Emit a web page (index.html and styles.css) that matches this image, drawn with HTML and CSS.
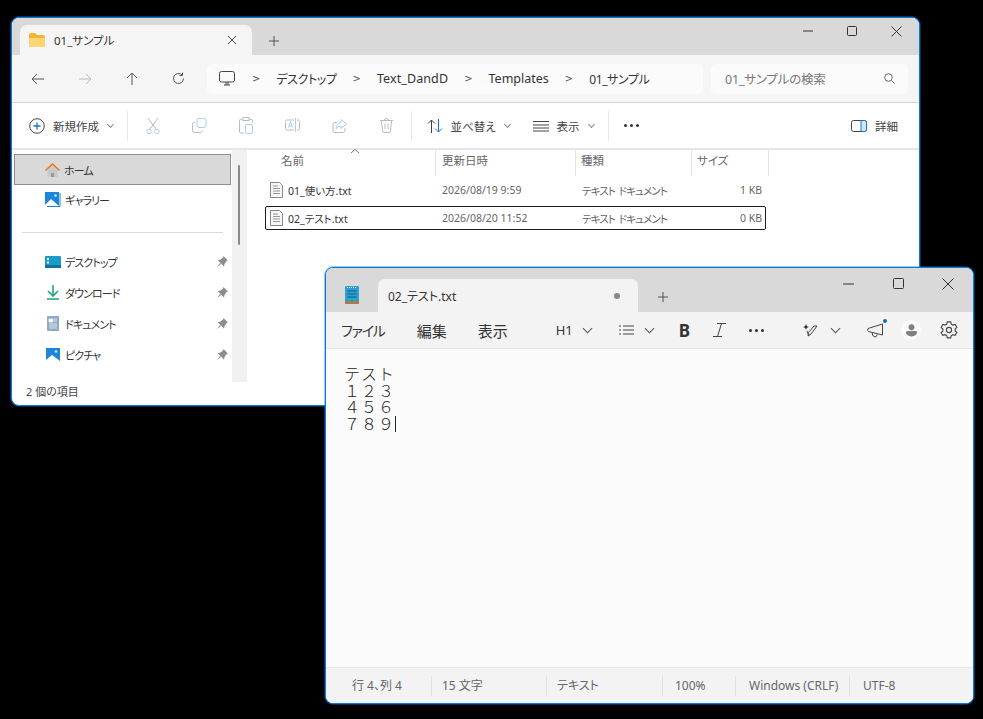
FILE: index.html
```html
<!DOCTYPE html>
<html lang="ja">
    <head>
        <meta charset="utf-8">
        <title>01_サンプル</title>
        <link rel="stylesheet" href="styles.css">
    </head>
    <body>
        <div class="window explorer">
            <div class="titlebar">
                <div class="tab">
                    <svg class="tab-icon" width="16" height="14" viewBox="0 0 16 14"><path d="M0 2q0-2 2-2h4l2 2h6q2 0 2 2v8q0 2-2 2H2q-2 0-2-2z" fill="#f2b632"/><path d="M0 5h16v7q0 2-2 2H2q-2 0-2-2z" fill="#fcd672"/></svg>
                    <span class="tab-name">01_サンプル</span>
                    <svg class="tab-close" width="10" height="10" viewBox="0 0 10 10"><path d="M1 1l8 8M9 1l-8 8" stroke="#444" fill="none"/></svg>
                </div>
                <svg class="tab-add" width="10" height="10" viewBox="0 0 10 10"><path d="M5 0v10M0 5h10" stroke="#555" fill="none"/></svg>
                <div class="controls">
                    <div class="control"><svg width="10" height="10" viewBox="0 0 10 10"><path d="M0 5h10" stroke="#333" stroke-width="1.2"/></svg></div>
                    <div class="control"><svg width="10" height="10" viewBox="0 0 10 10"><rect x=".5" y=".5" width="9" height="9" rx="1" fill="none" stroke="#333"/></svg></div>
                    <div class="control"><svg width="11" height="11" viewBox="0 0 11 11"><path d="M.5.5l10 10M10.5.5l-10 10" stroke="#333" fill="none"/></svg></div>
                </div>
            </div>

            <div class="addressbar">
                <div class="nav"><svg width="14" height="12" viewBox="0 0 14 12"><path d="M13 6H1M6 1L1 6l5 5" stroke="#555" fill="none"/></svg></div>
                <div class="nav"><svg width="14" height="12" viewBox="0 0 14 12"><path d="M1 6h12M8 1l5 5-5 5" stroke="#bbb" fill="none"/></svg></div>
                <div class="nav"><svg width="12" height="14" viewBox="0 0 12 14"><path d="M6 13V1M1 6l5-5 5 5" stroke="#555" fill="none"/></svg></div>
                <div class="nav"><svg width="13" height="13" viewBox="0 0 13 13"><path d="M11.5 6.5a5 5 0 1 1-1.5-3.6M10.5 .5v3h-3" stroke="#555" fill="none"/></svg></div>
                <div class="path">
                    <svg class="path-pc" width="16" height="15" viewBox="0 0 16 15"><rect x=".5" y=".5" width="15" height="10.5" rx="2" fill="none" stroke="#444"/><path d="M5 14h6M7 11v3M9 11v3" stroke="#444" fill="none"/></svg>
                    <span class="crumb-sep">&gt;</span><span class="crumb crumb-ja">デスクトップ</span>
                    <span class="crumb-sep">&gt;</span><span class="crumb crumb-text">Text_DandD</span>
                    <span class="crumb-sep">&gt;</span><span class="crumb">Templates</span>
                    <span class="crumb-sep">&gt;</span><span class="crumb crumb-ja">01_サンプル</span>
                </div>
                <div class="search">
                    <span>01_サンプルの検索</span>
                    <svg width="11" height="11" viewBox="0 0 11 11"><circle cx="4.5" cy="4.5" r="3.8" fill="none" stroke="#666"/><path d="M7.5 7.5l3 3" stroke="#666"/></svg>
                </div>
            </div>

            <div class="toolbar">
                <div class="tool tool-new">
                    <svg width="16" height="16" viewBox="0 0 16 16"><circle cx="8" cy="8" r="7.3" fill="none" stroke="#444"/><path d="M8 4.500v7M4.500 8h7" stroke="#1a73c8" stroke-width="1.3"/></svg>
                    <span>新規作成</span><i class="chev"></i>
                </div>
                <div class="tool-sep"></div>
                <div class="tool-icon"><svg width="14" height="16" viewBox="0 0 14 16"><path d="M2 0l8 11M12 0L4 11" stroke="#bbb" fill="none"/><circle cx="3" cy="13.5" r="2.3" fill="none" stroke="#a9d0f0"/><circle cx="11" cy="13.5" r="2.3" fill="none" stroke="#a9d0f0"/></svg></div>
                <div class="tool-icon"><svg width="15" height="15" viewBox="0 0 15 15"><rect x="5" y=".5" width="9" height="9" rx="2" fill="none" stroke="#a9d0f0"/><path d="M3 4Q.5 4 .5 6.5V12q0 2.500 2.500 2.500h5q2 0 2.500-2" fill="none" stroke="#bbb"/></svg></div>
                <div class="tool-icon"><svg width="14" height="17" viewBox="0 0 14 17"><path d="M3.500 2.500H1.500q-1 0-1 1V15q0 1 1 1H5M10.500 2.500h2q1 0 1 1V6" fill="none" stroke="#bbb"/><rect x="4" y=".5" width="6" height="3" fill="none" stroke="#bbb"/><rect x="6.5" y="7.5" width="7" height="9" rx="1.5" fill="none" stroke="#a9d0f0"/></svg></div>
                <div class="tool-icon"><svg width="16" height="15" viewBox="0 0 16 15"><path d="M9 2H2Q.5 2 .5 3.500v7Q.5 12 2 12h7M12 2h1q1.500 0 1.500 1.500v7Q14.500 12 13 12h-1" fill="none" stroke="#bbb"/><path d="M10.500 0v14M3.500 9.500l2-6 2 6M4.200 8h2.600" fill="none" stroke="#a9d0f0"/></svg></div>
                <div class="tool-icon"><svg width="15" height="14" viewBox="0 0 15 14"><path d="M13 9v2.500Q13 13.500 11 13.500H3Q1 13.500 1 11.500v-6Q1 3.500 3 3.500h2" fill="none" stroke="#bbb"/><path d="M9 .5l5.500 4.500L9 9.500V7Q5.500 7 4 10q.5-6 5-6.500z" fill="none" stroke="#a9d0f0"/></svg></div>
                <div class="tool-icon"><svg width="13" height="15" viewBox="0 0 13 15"><path d="M0 2.500h13M4.500 2.500q0-2 2-2t2 2M1.500 2.500l1 10.500q0 1.500 1.500 1.500h5q1.500 0 1.500-1.500l1-10.500M5 5.500v6M8 5.500v6" fill="none" stroke="#bbb"/></svg></div>
                <div class="tool-sep tool-sep-b"></div>
                <div class="tool tool-sort">
                    <svg width="16" height="14" viewBox="0 0 16 14"><path d="M4.500 14V1M1 4.500L4.500 1 8 4.500" fill="none" stroke="#444"/><path d="M11.500 0v13M8 9.500l3.500 3.500L15 9.500" fill="none" stroke="#1a73c8"/></svg>
                    <span>並べ替え</span><i class="chev"></i>
                </div>
                <div class="tool tool-view">
                    <svg width="16" height="12" viewBox="0 0 16 12"><path d="M0 1.500h16M0 5h16M0 8h16M0 11h16" stroke="#444" fill="none"/></svg>
                    <span>表示</span><i class="chev"></i>
                </div>
                <div class="tool-sep"></div>
                <div class="tool-more"><b></b><b></b><b></b></div>
                <div class="tool tool-detail">
                    <svg width="16" height="12" viewBox="0 0 16 12"><rect x=".5" y=".5" width="15" height="11" rx="2" fill="none" stroke="#444"/><path d="M10 .5h3.500q2 0 2 2v7q0 2-2 2H10z" fill="#cfe6f8" stroke="#1a73c8"/></svg>
                    <span>詳細</span>
                </div>
            </div>

            <div class="main">
                <div class="sidebar">
                    <div class="side-item selected">
                        <svg width="15" height="14" viewBox="0 0 15 14"><path d="M2.500 7v7h10V7L7.500 2.500z" fill="#c9c9c9"/><path d="M6 14v-4h3v4z" fill="#999"/><path d="M.5 7.500l7-6.500 7 6.500" fill="none" stroke="#e8751a" stroke-width="1.5"/></svg>
                        <span>ホーム</span>
                    </div>
                    <div class="side-item">
                        <svg width="16" height="15" viewBox="0 0 16 15"><rect width="14" height="14" fill="#1d86d8"/><circle cx="10.500" cy="3.500" r="1.300" fill="#cfe6f8"/><path d="M0 13l6-6 8 7H0z" fill="#fff"/><path d="M15 1v13.500H2" fill="none" stroke="#1d86d8"/></svg>
                        <span>ギャラリー</span>
                    </div>
                    <div class="side-divider"></div>
                    <div class="side-item">
                        <svg width="16" height="12" viewBox="0 0 16 12"><rect width="16" height="12" rx="1" fill="#1a9bc9"/><rect y="9" width="16" height="3" fill="#116f9c"/><path d="M2 2h2v2H2zM2 5.500h2v2H2z" fill="#fff"/></svg>
                        <span>デスクトップ</span><svg class="pin" width="11" height="11" viewBox="0 0 11 11"><path d="M6.500 0L11 4.500 9.500 5l-2 3-.5 2.500L.8 4.300 3.500 3.500l2.500-2zM3 7l-3 4 4-3z" fill="#8c8c8c"/></svg>
                    </div>
                    <div class="side-item">
                        <svg width="16" height="15" viewBox="0 0 16 15"><path d="M8 0v10M3 6l5 5 5-5" fill="none" stroke="#23a97b" stroke-width="1.6"/><path d="M2 14h12" stroke="#23a97b" stroke-width="1.6"/></svg>
                        <span>ダウンロード</span><svg class="pin" width="11" height="11" viewBox="0 0 11 11"><path d="M6.500 0L11 4.500 9.500 5l-2 3-.5 2.500L.8 4.300 3.500 3.500l2.500-2zM3 7l-3 4 4-3z" fill="#8c8c8c"/></svg>
                    </div>
                    <div class="side-item">
                        <svg width="16" height="15" viewBox="0 0 16 15"><rect x="2" width="12" height="15" rx="1" fill="#8fa9c8"/><path d="M4 3h4v3H4zM9 3h3M9 5h3M4 8h8M4 10h8M4 12h8" fill="#fff" stroke="#eef2f7" stroke-width=".8"/></svg>
                        <span>ドキュメント</span><svg class="pin" width="11" height="11" viewBox="0 0 11 11"><path d="M6.500 0L11 4.500 9.500 5l-2 3-.5 2.500L.8 4.300 3.500 3.500l2.500-2zM3 7l-3 4 4-3z" fill="#8c8c8c"/></svg>
                    </div>
                    <div class="side-item">
                        <svg width="16" height="14" viewBox="0 0 16 14"><rect x="1" width="14" height="13" fill="#1d86d8"/><circle cx="11" cy="3.500" r="1.300" fill="#cfe6f8"/><path d="M1 12l6-5 8 6H1z" fill="#fff"/></svg>
                        <span>ピクチャ</span><svg class="pin" width="11" height="11" viewBox="0 0 11 11"><path d="M6.500 0L11 4.500 9.500 5l-2 3-.5 2.500L.8 4.300 3.500 3.500l2.500-2zM3 7l-3 4 4-3z" fill="#8c8c8c"/></svg>
                    </div>
                </div>
                <div class="side-scroll"><div class="thumb"></div></div>
                <div class="files">
                    <div class="file-head">
                        <div class="col-name">名前</div>
                        <div class="col-date">更新日時</div>
                        <div class="col-type">種類</div>
                        <div class="col-size">サイズ</div>
                    </div>
                    <svg class="sort-caret" width="8" height="4" viewBox="0 0 8 4"><path d="M0 4l4-3.500L8 4" fill="none" stroke="#777"/></svg>
                    <div class="file-row">
                        <svg width="13" height="16" viewBox="0 0 13 16"><path d="M.5.5h9l3 3v12H.5z" fill="#f6f6f6" stroke="#888"/><path d="M3 4h5M3 6.500h7M3 9h7M3 11.500h7" stroke="#999"/></svg>
                        <span class="file-name">01_使い方.txt</span>
                        <span class="file-date">2026/08/19 9:59</span>
                        <span class="file-type">テキスト ドキュメント</span>
                        <span class="file-size">1 KB</span>
                    </div>
                    <div class="file-row focused">
                        <svg width="13" height="16" viewBox="0 0 13 16"><path d="M.5.5h9l3 3v12H.5z" fill="#f6f6f6" stroke="#888"/><path d="M3 4h5M3 6.500h7M3 9h7M3 11.500h7" stroke="#999"/></svg>
                        <span class="file-name">02_テスト.txt</span>
                        <span class="file-date">2026/08/20 11:52</span>
                        <span class="file-type">テキスト ドキュメント</span>
                        <span class="file-size">0 KB</span>
                    </div>
                </div>
            </div>
            <div class="explorer-status">2 個の項目</div>
        </div>

        <div class="window notepad">
            <div class="titlebar">
                <svg class="note-icon" width="14" height="18" viewBox="0 0 14 18"><rect width="14" height="17" rx="1" fill="#2f9fd0"/><rect y="15.5" width="14" height="2.5" fill="#b5763a"/><path d="M2.500 5h9M2.500 8h9M2.500 11h9" stroke="#0d5a85"/><path d="M2 1.500h10" stroke="#d5eef9" stroke-dasharray="1 1"/></svg>
                <div class="tab">
                    <span class="tab-name">02_テスト.txt</span>
                    <i class="tab-dot"></i>
                </div>
                <svg class="tab-add" width="10" height="10" viewBox="0 0 10 10"><path d="M5 0v10M0 5h10" stroke="#555" fill="none"/></svg>
                <div class="controls">
                    <div class="control"><svg width="11" height="10" viewBox="0 0 11 10"><path d="M0 5h11" stroke="#333" stroke-width="1.2"/></svg></div>
                    <div class="control"><svg width="11" height="11" viewBox="0 0 11 11"><rect x=".5" y=".5" width="10" height="10" rx="1" fill="none" stroke="#333"/></svg></div>
                    <div class="control"><svg width="12" height="12" viewBox="0 0 12 12"><path d="M.5.5l11 11M11.500.5l-11 11" stroke="#333" fill="none"/></svg></div>
                </div>
            </div>
            <div class="menubar">
                <span class="menu menu-file">ファイル</span>
                <span class="menu menu-edit">編集</span>
                <span class="menu menu-view">表示</span>
                <span class="fmt-h">H1</span><i class="chev chev-dark chev-h"></i>
                <svg class="fmt-list" width="15" height="10" viewBox="0 0 15 10"><path d="M0 1h2M0 5h2M0 9h2M4 1h11M4 5h11M4 9h11" stroke="#444" fill="none"/></svg><i class="chev chev-dark chev-list"></i>
                <b class="fmt-b">B</b>
                <svg class="fmt-i" width="13" height="14" viewBox="0 0 13 14"><path d="M4 .5h9M0 13.500h9M8.500.5l-4 13" stroke="#444" fill="none"/></svg>
                <div class="tool-more fmt-more"><b></b><b></b><b></b></div>
                <svg class="fmt-ai" width="15" height="15" viewBox="0 0 15 15"><path d="M3 1l.8 2.200L6 4 3.800 4.800 3 7 2.200 4.800 0 4l2.200-.8z" fill="#222"/><path d="M14 3L8 11l-3 2 .5-3.500L11 3zM4 8l2 5" fill="none" stroke="#444"/></svg><i class="chev chev-dark chev-ai"></i>
                <div class="fmt-news">
                    <svg width="18" height="15" viewBox="0 0 18 15"><path d="M15.500 1L1 5.500q-1 2 .5 3L15.500 12zM5 9.500q0 4 3 4.500 2 0 2-2.500" fill="none" stroke="#444"/></svg>
                    <i class="news-dot"></i>
                </div>
                <div class="avatar"><svg width="11" height="13" viewBox="0 0 12 14"><circle cx="6" cy="3.500" r="3.200" fill="#808080"/><path d="M0 9q0-1.500 1.500-1.500h9Q12 7.500 12 9q0 4-6 4.500Q0 13 0 9z" fill="#808080"/></svg></div>
                <svg class="gear" width="18" height="18" viewBox="0 0 16 16"><path d="M6.500.8h3l.5 2 1.500.8 2-.6 1.500 2.600-1.500 1.400v1.800l1.500 1.400-1.500 2.600-2-.6-1.500.8-.5 2h-3l-.5-2-1.500-.8-2 .6L1 10.400l1.500-1.400V7.200L1 5.800l1.500-2.800 2 .6L6 2.800z" fill="none" stroke="#444"/><circle cx="8" cy="8" r="2.300" fill="none" stroke="#444"/></svg>
            </div>
            <div class="editor">
                <div class="editor-line">テスト</div>
                <div class="editor-line">１２３</div>
                <div class="editor-line">４５６</div>
                <div class="editor-line">７８９<i class="caret"></i></div>
            </div>
            <div class="note-status">
                <div class="cell cell-pos">行 4、列 4</div>
                <div class="cell cell-count">15 文字</div>
                <div class="cell cell-kind">テキスト</div>
                <div class="cell cell-zoom">100%</div>
                <div class="cell cell-eol">Windows (CRLF)</div>
                <div class="cell cell-enc">UTF-8</div>
            </div>
        </div>
    </body>
</html>
```

FILE: styles.css
```css
html, body {
    height: 100%;
}

body {
    background: #000;
    color: #333;
    font-family: "Noto Sans", "Noto Sans CJK JP", sans-serif;
    font-feature-settings: "palt";
    margin: 0;
    overflow: hidden;
}

svg {
    display: block;
    flex: none;
}

.window {
    border: 1px solid #0a78d7;
    border-radius: 8px;
    box-shadow: 0 0 0 1px rgba(10, 120, 215, .4);
    box-sizing: border-box;
    display: flex;
    flex-direction: column;
    overflow: hidden;
    position: absolute;
}

.explorer {
    background: #fff;
    height: 389px;
    left: 11px;
    top: 17px;
    width: 909px;
}

.notepad {
    background: #fbfbfb;
    height: 437px;
    left: 325px;
    top: 267px;
    width: 649px;
}

/* title bar, shared */

.titlebar {
    align-items: flex-end;
    background: #d9d9d9;
    display: flex;
    flex: none;
    height: 37px;
}

.tab {
    align-items: center;
    background: #f5f5f5;
    border-radius: 7px 7px 0 0;
    box-sizing: border-box;
    display: flex;
    font-size: 11.5px;
    height: 30px;
    margin-left: 8px;
    padding: 0 15px 0 9px;
    width: 232px;
}

.tab-icon {
    margin-right: 9px;
}

.tab-name {
    flex: 1;
}

.tab-add {
    margin: 0 0 9px 17px;
}

.controls {
    align-self: flex-start;
    display: flex;
    margin-left: auto;
}

.control {
    align-items: center;
    display: flex;
    height: 26px;
    justify-content: center;
    width: 44px;
}

.explorer .controls {
    margin-right: 1px;
}

/* explorer address row */

.addressbar {
    align-items: center;
    background: #f5f5f5;
    border-bottom: 1px solid #d5d5d5;
    display: flex;
    flex: none;
    height: 47px;
    padding-left: 2px;
}

.nav {
    align-items: center;
    display: flex;
    justify-content: center;
    width: 47px;
}

.path {
    align-items: center;
    background: #fbfbfb;
    border-radius: 5px;
    display: flex;
    font-size: 12.5px;
    height: 30px;
    margin-left: 5px;
    padding-left: 12px;
    width: 484px;
}

.path-pc {
    margin-right: 1px;
}

.crumb-ja {
    font-size: 12px;
    letter-spacing: -.4px;
}

.crumb-text {
    letter-spacing: .1px;
}

.crumb-sep {
    color: #555;
    font-family: "DejaVu Sans", sans-serif;
    font-size: 10px;
    margin: 0 16px;
}

.search {
    align-items: center;
    background: #fbfbfb;
    border-radius: 5px;
    box-sizing: border-box;
    color: #777;
    display: flex;
    font-size: 12.5px;
    height: 30px;
    justify-content: space-between;
    letter-spacing: -.2px;
    margin-left: 8px;
    padding: 0 13px 0 14px;
    width: 197px;
}

/* explorer toolbar */

.toolbar {
    align-items: center;
    border-bottom: 2px solid #e6e6e6;
    display: flex;
    flex: none;
    font-size: 11.5px;
    height: 45px;
    padding-left: 17px;
}

.tool {
    align-items: center;
    color: #444;
    display: flex;
    gap: 8px;
}

.tool-new {
    width: 98px;
}

.tool-sep {
    background: #e8e8e8;
    height: 30px;
    margin-right: 2px;
    width: 1px;
}

.tool-icon {
    align-items: center;
    display: flex;
    justify-content: center;
    width: 46.6px;
}

.tool-sep-b {
    margin-left: 1px;
    margin-right: 15px;
}

.tool-sort {
    width: 106px;
}

.tool-view {
    width: 75px;
}

.tool-more {
    display: flex;
    gap: 3px;
    margin-left: 13px;
}

.tool-more b {
    background: #333;
    border-radius: 50%;
    height: 3px;
    width: 3px;
}

.tool-detail {
    margin-left: auto;
    margin-right: 21px;
}

.chev {
    border-bottom: 1px solid #888;
    border-right: 1px solid #888;
    display: block;
    height: 4px;
    margin: -3px 0 0 1px;
    transform: rotate(45deg);
    width: 4px;
}

/* explorer body */

.main {
    display: flex;
    flex: 1;
    min-height: 0;
}

.sidebar {
    box-sizing: border-box;
    flex: none;
    overflow: hidden;
    padding: 4px 1px 0 2px;
    width: 220px;
}

.side-item {
    align-items: center;
    border: 1px solid transparent;
    box-sizing: border-box;
    display: flex;
    font-size: 11px;
    gap: 4px;
    height: 31px;
    letter-spacing: -.9px;
    padding-left: 30px;
}

.side-item .pin {
    margin-left: auto;
    margin-right: 2px;
}

.side-item.selected {
    background: #d9d9d9;
    border-color: #8f8f8f;
    margin-bottom: -1px;
}

.side-divider {
    background: #d9d9d9;
    height: 1px;
    margin: 17px 8px 13px;
}

.side-scroll {
    background: #f1f1f1;
    box-sizing: border-box;
    flex: none;
    padding: 15px 0 0 6px;
    width: 15px;
}

.thumb {
    background: #8a8a8a;
    border-radius: 1px;
    height: 80px;
    width: 2px;
}

.files {
    flex: 1;
    font-size: 10.5px;
    position: relative;
}

.file-head {
    color: #666;
    display: flex;
    font-size: 11.5px;
    height: 26px;
}

.file-head div {
    border-right: 1px solid #e5e5e5;
    box-sizing: border-box;
    line-height: 22px;
}

.col-name {
    padding-left: 34px;
    width: 189px;
}

.col-date {
    padding-left: 6px;
    width: 140px;
}

.col-type {
    padding-left: 5px;
    width: 116px;
}

.col-size {
    padding-left: 5px;
    width: 77px;
}

.sort-caret {
    left: 104px;
    position: absolute;
    top: -1px;
}

.file-row {
    align-items: center;
    border: 1px solid transparent;
    border-radius: 2px;
    box-sizing: border-box;
    display: flex;
    height: 24px;
    margin: 2px 0 0 18px;
    padding-left: 4px;
    width: 501px;
}

.file-row.focused {
    border-color: #1c1c1c;
    margin-top: 4px;
}

.file-name {
    color: #333;
    margin-left: 5px;
    width: 154px;
}

.file-date {
    color: #666;
    width: 140px;
}

.file-type {
    color: #666;
    letter-spacing: -.9px;
    width: 134px;
    word-spacing: 2px;
}

.file-size {
    color: #666;
    flex: 1;
    padding-right: 3px;
    text-align: right;
}

.explorer-status {
    color: #444;
    flex: none;
    font-size: 11px;
    height: 23px;
    line-height: 19px;
    padding-left: 14px;
}

/* notepad */

.notepad .titlebar {
    height: 44px;
}

.notepad .tab {
    background: #f3f3f3;
    font-size: 12px;
    height: 33px;
    margin-left: 19px;
    padding: 0 18px 0 10px;
    width: 260px;
}

.notepad .tab-add {
    margin: 0 0 10px 20px;
}

.note-icon {
    align-self: center;
    margin: 10px 0 0 19px;
}

.tab-dot {
    background: #888;
    border-radius: 50%;
    display: block;
    height: 6px;
    width: 6px;
}

.notepad .control {
    height: 31px;
    width: 50px;
}

.menubar {
    align-items: center;
    background: #f3f3f3;
    border-bottom: 1px solid #e5e5e5;
    display: flex;
    flex: none;
    font-size: 15px;
    height: 36px;
    padding-left: 15px;
}

.menu {
    color: #333;
}

.menu-file {
    font-size: 14px;
    letter-spacing: -1.2px;
}

.menu-edit {
    margin-left: 32px;
}

.menu-view {
    margin-left: 31px;
}

.fmt-h {
    font-size: 13px;
    margin-left: 48px;
}

.chev-dark {
    border-color: #555;
    height: 6px;
    width: 6px;
}

.chev-h {
    margin-left: 11px;
}

.fmt-list {
    margin-left: 28px;
}

.chev-list {
    margin-left: 12px;
}

.fmt-b {
    font-size: 17px;
    margin-left: 26px;
}

.fmt-i {
    margin-left: 23px;
}

.fmt-more {
    margin-left: 23px;
}

.fmt-ai {
    margin-left: 39px;
}

.chev-ai {
    margin-left: 14px;
}

.fmt-news {
    margin-left: 28px;
    position: relative;
}

.news-dot {
    background: #0f6cbd;
    border-radius: 50%;
    height: 4px;
    position: absolute;
    right: -2px;
    top: -4px;
    width: 4px;
}

.avatar {
    align-items: center;
    background: #fbfbfb;
    border-radius: 50%;
    display: flex;
    height: 20px;
    justify-content: center;
    margin-left: 16px;
    width: 20px;
}

.gear {
    margin-left: 19px;
}

.editor {
    color: #222;
    flex: 1;
    font-size: 16px;
    letter-spacing: 1px;
    line-height: 16.7px;
    padding: 16px 0 0 18px;
}

.editor-line {
    font-family: "Noto Sans CJK JP", sans-serif;
    font-feature-settings: normal;
    font-weight: 300;
}

.caret {
    background: #222;
    display: inline-block;
    height: 16px;
    vertical-align: -2px;
    width: 1px;
}

.note-status {
    align-items: center;
    background: #f3f3f3;
    border-top: 1px solid #e8e8e8;
    color: #666;
    display: flex;
    flex: none;
    font-size: 12px;
    height: 35px;
}

.cell {
    border-right: 1px solid #e2e2e2;
    box-sizing: border-box;
    height: 20px;
    line-height: 20px;
    padding-left: 10px;
}

.cell-pos {
    padding-left: 26px;
    width: 106px;
}

.cell-count {
    width: 115px;
}

.cell-kind {
    width: 116px;
}

.cell-zoom {
    padding-left: 12px;
    width: 73px;
}

.cell-eol {
    padding-left: 13px;
    width: 114px;
}

.cell-enc {
    border-right: 0;
    padding-left: 13px;
}
```
